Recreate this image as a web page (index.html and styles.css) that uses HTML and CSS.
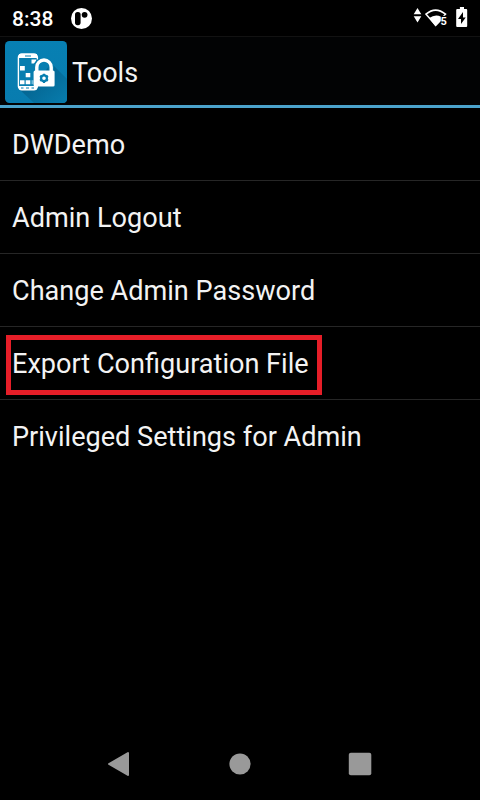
FILE: index.html
```html
<!DOCTYPE html>
<html lang="en">
<head>
<meta charset="utf-8">
<title>Tools</title>
<link rel="stylesheet" href="styles.css">
</head>
<body>
<div class="status">
  <span class="clock">8:38</span>
  <svg class="notice" width="22" height="22" viewBox="0 0 22 22"><circle cx="11.500" cy="11.500" r="10.500" fill="#fff"/><rect x="5" y="5" width="5.600" height="13.200" rx="2.600"/><circle cx="14.600" cy="7.800" r="2.900"/></svg>
  <svg class="signals" width="56" height="24" viewBox="0 0 56 24" fill="#fff">
    <path d="M4.500 4l3.800 6.200H.7zM.7 12.300h7.600l-3.800 6.200z"/>
    <path d="M13 10.200Q22.500 2 32.500 10.200L22.600 21z" fill="none" stroke="#fff" stroke-width="1.600"/>
    <path d="M16.200 14Q22.500 9.600 28 12.800V17L22.600 22.400z"/>
    <path d="M27.800 11.800h8v12h-8z" fill="#000"/>
    <text class="band" x="27.600" y="21.300">5</text>
    <path d="M45.500 5h2.200V3h4.100v2h2.200q1 0 1 1V22q0 1-1 1h-9q-1 0-1-1V6q0-1 1-1z" transform="translate(-.8)"/>
    <path d="M50.500 8l-5 7h3v5l4.700-6.500H50.500z" fill="#000" transform="translate(-.5)"/>
  </svg>
</div>
<header class="header">
  <svg width="62" height="62" viewBox="0 0 62 62">
    <defs>
      <linearGradient id="base" x2="0" y2="1"><stop stop-color="#0780b3"/><stop offset="1" stop-color="#087caf"/></linearGradient>
      <linearGradient id="shade" gradientUnits="userSpaceOnUse" x1="28" y1="28" x2="58" y2="60"><stop stop-color="#04618c"/><stop offset="1" stop-color="#077aab"/></linearGradient>
    </defs>
    <rect width="62" height="62" rx="4.500" fill="url(#base)"/>
    <path d="M46 22L62 38V58Q62 62 58 62H29L14 48 32 42z" fill="url(#shade)"/>
    <rect x="13.400" y="13" width="19" height="35.800" rx="3.500" fill="#087eaf" stroke="#fff" stroke-width="1.400"/>
    <path d="M14 13h18v4H14zM14 45h18v3.500H14z" fill="#fff"/>
    <path d="M20 15h6" stroke="#087eaf" stroke-width="1"/>
    <path d="M16 47h2.500m2.500 0h3m2.500 0h2.500" stroke="#087eaf" stroke-width="1"/>
    <path d="M26.500 18.500h4.500v4h-4.500zM15 25h4.800v4.500H15zM20.700 32h4.600v4.300h-4.600zM15 39.200h4.500v4H15zM20.700 39.200h4.600v4h-4.600z" fill="#fff"/>
    <path d="M26.500 39.200h2v4h-2z" fill="#70bad9"/>
    <path d="M31 29V26.500a7.600 7.600 0 0 1 15.200 0V29" fill="none" stroke="#087eaf" stroke-width="5.500"/>
    <path d="M31.800 31V26.200a7.200 7.200 0 0 1 14.400 0V31" fill="none" stroke="#fff" stroke-width="3.400"/>
    <rect x="28.600" y="29.500" width="21" height="16" rx="1.500" fill="#fff"/>
    <g stroke="#087eaf" stroke-width="2.200" fill="none"><circle cx="39" cy="37.300" r="2.900"/><path d="M39 32.700v1.500m0 6.200v1.500M35 35l1.200.7m5.600 3.200l1.200.7M43 35l-1.200.7m-5.600 3.200l-1.200.7"/></g>
  </svg>
  <h1 class="title">Tools</h1>
</header>
<ul class="list">
  <li class="row">DWDemo</li>
  <li class="row">Admin Logout</li>
  <li class="row">Change Admin Password</li>
  <li class="row marked">Export Configuration File</li>
  <li class="row">Privileged Settings for Admin</li>
</ul>
<nav class="nav">
  <svg width="24" height="26" viewBox="0 0 24 26"><path d="M1 13L20 2V24z" fill="#999" stroke="#999" stroke-width="2" stroke-linejoin="round"/></svg>
  <svg width="24" height="26" viewBox="0 0 24 26"><circle cx="12" cy="13" r="10.600" fill="#999"/></svg>
  <svg width="24" height="26" viewBox="0 0 24 26"><rect x=".8" y="1.800" width="22.500" height="22.500" rx="2" fill="#999"/></svg>
</nav>
</body>
</html>
```
FILE: styles.css
```css
*, *::after { box-sizing: border-box; }
body {
  margin: 0;
  height: 800px;
  display: flex;
  flex-direction: column;
  background: #000;
  color: #f3f3f3;
  font-family: Roboto, sans-serif;
  overflow: hidden;
}
.status {
  height: 36px;
  display: flex;
  align-items: center;
  padding: 0 11px 0 12px;
}
.clock {
  width: 58px;
  padding-top: 2px;
  font-size: 21px;
  font-weight: 500;
  line-height: 36px;
  color: #fff;
}
.signals { margin-left: auto; margin-bottom: 4px; }
.band { font-size: 11px; font-weight: 700; }
.header {
  height: 72px;
  display: flex;
  align-items: center;
  gap: 5px;
  padding: 1px 5px 0;
  border-top: 1px solid #121212;
  border-bottom: 3px solid #4ba3cc;
  background: #020304;
}
.title {
  margin: 0;
  padding-top: 2px;
  font-size: 27px;
  font-weight: 400;
  line-height: 32px;
}
.list { margin: 0; padding: 0; list-style: none; }
.row {
  position: relative;
  height: 73px;
  padding-left: 12px;
  border-bottom: 1px solid #262626;
  font-size: 27.1px;
  line-height: 75px;
}
.row:last-child { border-bottom: 0; }
.marked::after {
  content: "";
  position: absolute;
  left: 6px;
  top: 8px;
  width: 316px;
  height: 60px;
  border: 5px solid #e61e28;
}
.nav {
  height: 72px;
  margin-top: auto;
  padding: 0 108px;
  display: flex;
  align-items: center;
  justify-content: space-between;
}
```
